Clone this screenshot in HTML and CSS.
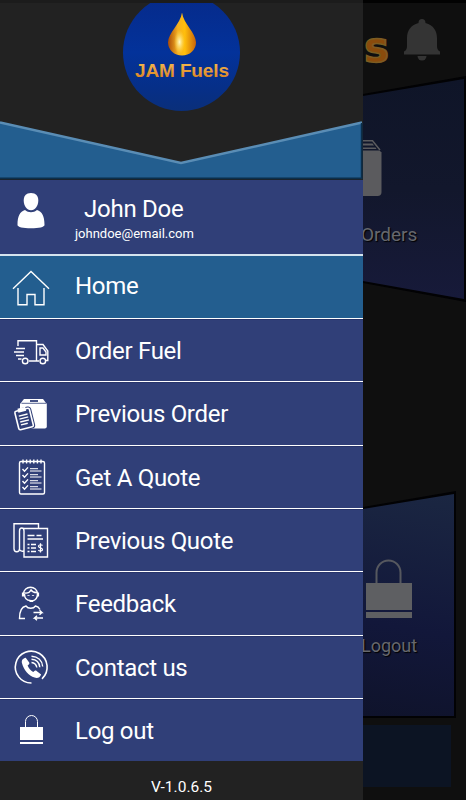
FILE: index.html
```html
<!DOCTYPE html>
<html>

	<head>
		<meta charset="utf-8" />
		<title>JAM Fuels</title>
		<link rel="stylesheet" href="styles.css">
	</head>

	<body>
		<!-- home screen, dimmed while the menu is open -->
		<div class="page">
			<div class="pageHead">
				<span class="brand">s</span>
				<svg class="bell" width="38" height="44" viewBox="0 0 38 44">
					<path d="M19 1c2.200 0 3.500 1.500 3.500 4 8 2 11.500 8 11.500 15v8c0 3 1 4.500 3 5.500v3H1v-3c2-1 3-2.500 3-5.500v-8c0-7 3.500-13 11.500-15 0-2.500 1.300-4 3.500-4z" />
					<path d="M14.500 38h9a4.500 4.500 0 0 1-9 0z" />
				</svg>
			</div>
			<div class="tile tileOrders">
				<div class="face">
					<svg class="boxIcon" width="19" height="56" viewBox="0 0 19 56">
						<path d="M0 .8h9.500l7.500 9.200" fill="none" stroke="#5b5b5e" stroke-width="1.500" />
						<path d="M0 3.500h9.500l1.500 2H0zM0 7.500h12.500l1 1.500H0z" />
						<path d="M0 10.500h16.500l2 2V52q0 4-4 4H0z" />
					</svg>
					<span class="tileText">Orders</span>
				</div>
			</div>
			<div class="tile tileLogout">
				<div class="face">
					<svg class="lockIcon" width="46" height="60" viewBox="0 0 46 60">
						<path d="M10.500 25V13.500a12 12 0 0 1 24 0V25" fill="none" stroke="#56585f" stroke-width="2" />
						<path d="M0 24h46v27H0zM0 53h46v6H0z" />
					</svg>
					<span class="tileText">Logout</span>
				</div>
			</div>
			<div class="pageBar"></div>
		</div>

		<div class="drawer">
			<div class="drawerTop">
				<div class="logo">
					<svg width="30" height="44" viewBox="0 0 30 44">
						<defs>
							<linearGradient id="drop" x1="0" x2="1" y1="0" y2="0">
								<stop offset="0" stop-color="#a84a08" />
								<stop offset=".35" stop-color="#f5b021" />
								<stop offset=".6" stop-color="#ffbe0c" />
								<stop offset="1" stop-color="#c86409" />
							</linearGradient>
							<radialGradient id="glow">
								<stop offset="0" stop-color="#fff9c8" />
								<stop offset="1" stop-color="#ffe45a" stop-opacity="0" />
							</radialGradient>
						</defs>
						<path d="M15 .5C16.500 12 29 21 29 30.500A14 13 0 0 1 1 30.500C1 21 13.500 12 15 .5z" fill="url(#drop)" />
						<ellipse cx="12.500" cy="30" rx="5.500" ry="12" fill="url(#glow)" />
					</svg>
					<svg class="logoName" width="100" height="22" viewBox="0 0 100 22">
						<defs>
							<linearGradient id="gold" x1="0" x2="0" y1="0" y2="1">
								<stop offset="0" stop-color="#f5c055" />
								<stop offset="1" stop-color="#d97c1c" />
							</linearGradient>
						</defs>
						<text x="50" y="17" text-anchor="middle" textLength="94" fill="url(#gold)">JAM Fuels</text>
					</svg>
				</div>
			</div>
			<svg class="chevron" width="363" height="60" viewBox="0 0 363 60">
				<path d="M0 2l181 40.500L362 2v57H0z" fill="#235e8f" />
				<path d="M0 2.500l181 40.500L362 2.500" fill="none" stroke="#5a8db5" stroke-width="2.500" />
				<path d="M0 58.300h361.700V3" fill="none" stroke="#0b2e4b" stroke-width="1.800" />
			</svg>

			<div class="profile">
				<svg width="28" height="36" viewBox="0 0 28 36">
					<path d="M14 0c5 0 7.300 3 7.300 7.500 0 5-3 9.800-7.300 9.800S6.700 12.500 6.700 7.500C6.700 3 9 0 14 0z" />
					<path d="M8 17c3.500 3 8.500 3 12 0 5 1.500 7.500 6 7.500 15 0 2-5.500 3.300-13.500 3.300S.5 34 .5 32C.5 23 3 18.500 8 17z" />
				</svg>
				<div class="who">
					<span class="name">John Doe</span>
					<span class="email">johndoe@email.com</span>
				</div>
			</div>

			<div class="menu">
				<div class="item active">
					<svg width="40" height="40" viewBox="0 0 40 40">
						<path d="M2 21.700L20 4.500l18 17.200M7 21v16.800h9V27.500h8v10.300h9V21" />
					</svg>
					<span>Home</span>
				</div>
				<div class="item">
					<svg width="40" height="40" viewBox="0 0 40 40">
						<path d="M7 16v-5.200h18.500V31H18M25.500 14.500h6.500l4.800 6.500v9.500H35M28 31h-2.500M29 18h3l3 4v3h-6zM5 18.500h9M3 22h10M5 25.500h8M7 29h3.500" />
						<circle cx="14.200" cy="31" r="2.800" />
						<circle cx="31.800" cy="31" r="2.800" />
					</svg>
					<span>Order Fuel</span>
				</div>
				<div class="item">
					<svg width="40" height="40" viewBox="0 0 40 40">
						<path class="solid" d="M13 6h19l3.800 5v22.500q0 2-2 2H9V11z" />
						<path d="M10.500 10.300h24.500" stroke="#303f78" stroke-width=".8" />
						<path d="M19 8h8" stroke="#303f78" stroke-width="1.800" />
						<g transform="rotate(-14 13 25.500)">
							<rect x="5.500" y="16.500" width="15" height="19" rx="1.500" fill="#303f78" stroke="#303f78" stroke-width="3.600" />
							<rect x="5.500" y="16.500" width="15" height="19" rx="1.500" stroke-width="1.600" />
							<path class="solid" d="M9 14.500h8v4H9z" />
							<path d="M8.500 22h9M8.500 25h9M8.500 28h9M8.500 31h7" />
						</g>
					</svg>
					<span>Previous Order</span>
				</div>
				<div class="item">
					<svg width="40" height="40" viewBox="0 0 40 40">
						<rect x="8.500" y="4.500" width="25" height="32.500" rx="1.500" />
						<path d="M12 2.500v4M15.600 2.500v4M19.200 2.500v4M22.800 2.500v4M26.400 2.500v4M30 2.500v4" />
						<path d="M11.500 12l2 2.200 3.500-3.800M11.500 18l2 2.200 3.500-3.800M11.500 24l2 2.200 3.500-3.800M11.500 30l2 2.200 3.500-3.800" />
						<path d="M19 11.700h8M19 14h11.500M19 17.700h8M19 20h11.500M19 23.700h8M19 26h11.500M19 29.700h8M19 32h11.500" stroke-width="1" />
					</svg>
					<span>Get A Quote</span>
				</div>
				<div class="item">
					<svg width="40" height="40" viewBox="0 0 40 40">
						<path d="M27.500 8V3.700H3v25c0 4 5.500 4 5.500 0V11c0-4 4.500-4 4.500 0M8.500 29.500c1 2 2.500 2 4.500 1.500" />
						<path d="M12 8.500h24.500V37H13V11" />
						<path d="M16.500 15.500h7M25.500 15.500h5M16.500 19h15.500M16.500 24.500h2M20 24.500h5M16.500 28h2M20 28h5M16.500 31.500h2M20 31.500h5" />
						<path d="M31.500 25.500c-1-1.200-4-1-4 .8 0 2 4 1.200 4 3.200 0 1.800-3 2-4.200.7M29.500 23.200v9.300" stroke-width="1.200" />
					</svg>
					<span>Previous Quote</span>
				</div>
				<div class="item">
					<svg width="40" height="40" viewBox="0 0 40 40">
						<path d="M12.500 11c0-9 14-9 14 0M13.500 10c3 .5 5.500-1 6.500-3 1 1.500 3 2.500 5.500 2.500M13.500 11c0 4 2 6.500 6 6.500M26.500 11c0 3.500-1.500 6-5 7" />
						<path d="M12 9.500v4M27 9.500v4M17.500 12v.8M22 12v.8M18.500 18h3.500" stroke-width="2.200" />
						<path d="M14 35.500H8.500c0-6 1-11.500 6.500-12.500 2 3 7.500 3 9.500 0 2 .4 3.500 1.500 4.500 3.500" />
						<path d="M22.500 29.500H31l-2.500-2.300M31 29.500l-2.500 2.300M32 35h-8.500l2.500-2.300M23.500 35l2.500 2.300" />
					</svg>
					<span>Feedback</span>
				</div>
				<div class="item">
					<svg width="40" height="40" viewBox="0 0 40 40">
						<path d="M20.500 36A15.900 15.900 0 1 1 31 31.800" stroke-width="1.600" />
						<path class="solid" d="M14.700 10.800l3.500 4.800c.6 1-.1 2-1.600 3 1.200 3 3 5 5.600 6.500 1.300-1.400 2.300-2 3.400-1.200l4.500 3.500c-1 3-3.500 4.200-6.500 3.200C17.500 28.500 12.800 23 11 16.200c-.8-2.700 1-5 3.700-5.400z" />
						<path d="M20.500 15.500c3 .3 4.800 2 5.300 5M20.500 12.300c4.800.3 7.800 3.200 8.300 8M20.500 9.200C27 9.500 31.200 13.500 31.700 19.500" />
					</svg>
					<span>Contact us</span>
				</div>
				<div class="item">
					<svg width="40" height="40" viewBox="0 0 40 40">
						<path d="M14.500 17v-5.500a6 6 0 0 1 12 0V17" stroke-width="1" />
						<path class="solid" d="M9 17h23v13H9zM9 32h23v2H9z" />
					</svg>
					<span>Log out</span>
				</div>
			</div>

			<div class="version">V-1.0.6.5</div>
		</div>
	</body>

</html>
```
FILE: styles.css
```css
* {
	box-sizing: border-box;
}

body {
	margin: 0;
	width: 466px;
	height: 800px;
	background: #0f0f0f;
	font-family: Roboto, sans-serif;
	overflow: hidden;
}

svg {
	display: block;
	flex-shrink: 0;
}

/* home screen */
.page {
	height: 800px;
	padding-left: 363px;
	display: flex;
	flex-direction: column;
	border-top: 3px solid #020202;
}

.pageHead {
	height: 73px;
	display: flex;
	align-items: flex-start;
	gap: 13px;
	padding-top: 15px;
}

.brand {
	width: 27px;
	padding-left: 1px;
	font: bold 42px/60px "DejaVu Sans", sans-serif;
	color: #8a4b0c;
	-webkit-text-stroke: 1.5px #7c5c22;
}

.bell {
	fill: #343434;
}

.tile {
	background: #020204;
}

.face {
	height: 100%;
	display: flex;
	flex-direction: column;
	align-items: flex-start;
}

.tileOrders {
	height: 226px;
	clip-path: polygon(0 18px, 103px 0, 103px 226px, 0 207px);
}

.tileOrders .face {
	padding-top: 64px;
	background: linear-gradient(#0f1528, #12172c 50%, #171a3a);
	clip-path: polygon(0 20px, 101px 3px, 101px 223px, 0 205px);
}

.tileLogout {
	width: 93px;
	height: 227px;
	margin-top: 189px;
	clip-path: polygon(0 16px, 93px 0, 93px 227px, 0 227px);
}

.tileLogout .face {
	padding-top: 68px;
	background: linear-gradient(190deg, #1b2742, #12173a 60%, #0f132b);
	clip-path: polygon(0 18px, 91px 3px, 91px 225px, 0 225px);
}

.boxIcon {
	fill: #5b5b5e;
}

.lockIcon {
	margin-left: 3px;
	fill: #5e5f62;
}

.tileText {
	margin-left: -2px;
	color: #67686d;
	font-size: 19px;
	line-height: 24px;
	text-shadow: 1px 1px 1px #000;
}

.tileOrders .tileText {
	margin-top: 27px;
}

.tileLogout .tileText {
	margin-top: 15px;
	font-size: 18px;
}

.pageBar {
	width: 88px;
	height: 62px;
	margin-top: 7px;
	background: #0c1423;
}

/* side menu */
.drawer {
	position: absolute;
	left: 0;
	top: 0;
	width: 363px;
	height: 800px;
	background: #222;
	color: #fff;
	display: flex;
	flex-direction: column;
}

.drawerTop {
	height: 120px;
	display: flex;
	justify-content: center;
	border-top: 3px solid #1c1c1c;
	overflow: hidden;
}

.logo {
	width: 117px;
	height: 117px;
	margin-top: -9px;
	border-radius: 50%;
	background: linear-gradient(#062a8a, #03329a 50%, #062f88 80%, #0a2f7a);
	display: flex;
	flex-direction: column;
	align-items: center;
	padding-top: 18px;
}

.logoName {
	margin-top: 4px;
	font: bold 19px "Liberation Sans", sans-serif;
}

.profile {
	height: 74px;
	background: #303f78;
	display: flex;
	padding: 13px 0 0 17px;
}

.who {
	display: flex;
	flex-direction: column;
	margin-left: 30px;
}

.name {
	margin: -1px 0 1px 9px;
	font-size: 24px;
	line-height: 34px;
	letter-spacing: -0.25px;
}

.email {
	font-size: 13px;
	line-height: 14px;
}

.item {
	height: 63.33px;
	display: flex;
	align-items: center;
	gap: 24px;
	padding-left: 11px;
	background: #303f78;
	border-top: 1px solid #fff;
	font-size: 24px;
	line-height: 28px;
	letter-spacing: -0.3px;
	box-shadow: inset 0 1px #27346a;
}

.item span {
	margin-top: 2px;
}

.active {
	height: 64px;
	background: #235e8f;
	border-top: 2px solid #d5e4ee;
	box-shadow: none;
}

.active span {
	margin-top: -2px;
}

.item svg {
	fill: none;
	stroke: #fff;
	stroke-width: 1.4;
}

.item .solid {
	fill: #fff;
	stroke: none;
}

.profile svg {
	fill: #fff;
}

.version {
	padding-top: 17px;
	text-align: center;
	font-size: 15.5px;
	line-height: 18px;
}
```
